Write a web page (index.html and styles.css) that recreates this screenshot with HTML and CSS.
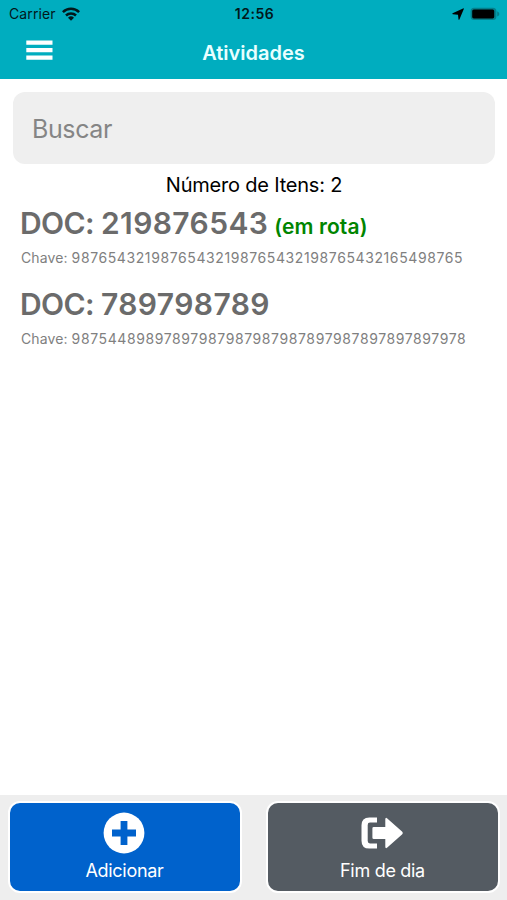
FILE: index.html
```html
<!DOCTYPE html>
<html lang="pt-BR">
    <head>
        <meta charset="utf-8" />
        <title>Atividades</title>
        <meta name="viewport" content="width=device-width, initial-scale=1.0" />
        <link rel="stylesheet" href="styles.css">
    </head>

    <body>
        <header>
            <div class="status">
                <div class="carrier">
                    <span>Carrier</span>
                    <svg width="18" height="14" viewBox="0 0 18 14">
                        <g fill="none" stroke="#02181b" stroke-width="2.5">
                            <path d="M0.9 5.2a11.5 11.5 0 0 1 16.2 0" />
                            <path d="M4 8.5a7.1 7.1 0 0 1 10 0" />
                        </g>
                        <path fill="#02181b" d="M9 13.8 6 10.8a4.3 4.3 0 0 1 6 0z" />
                    </svg>
                </div>
                <span class="time">12:56</span>
                <div class="indicators">
                    <svg width="12" height="12" viewBox="0 0 12 12">
                        <path d="M11.6 0.3Q12 0.4 11.8 0.9L7.4 11.4Q6.9 12.2 6.5 11.4L6 6.8 0.8 6.2Q0 5.8 0.6 5.2z" />
                    </svg>
                    <svg width="30" height="14" viewBox="0 0 30 14">
                        <rect x="0.6" y="0.7" width="25.8" height="12.4" rx="3.6" fill="#047f8b" />
                        <rect x="2.2" y="2.4" width="22" height="9" rx="1.6" />
                        <path fill="#047f8b" d="M27.2 4.3q2.2 1 2.2 2.6t-2.2 2.6z" />
                    </svg>
                </div>
            </div>
            <div class="navbar">
                <button class="menu" aria-label="Menu">
                    <svg width="27" height="20" viewBox="0 0 27 20">
                        <path d="M0.3 0.4h26.2v4.4H0.3zM0.3 8h26.2v4.3H0.3zM0.3 15.4h26.2v4.4H0.3z" />
                    </svg>
                </button>
                <h1>Atividades</h1>
            </div>
        </header>

        <main>
            <input class="search" type="text" placeholder="Buscar" />
            <p class="count">Número de Itens: 2</p>
            <ul class="items">
                <li>
                    <h2><span class="doc">DOC: <span>219876543</span></span> <span class="route">(em rota)</span></h2>
                    <p class="key">Chave: <span>98765432198765432198765432198765432165498765</span></p>
                </li>
                <li>
                    <h2><span class="doc">DOC: <span>789798789</span></span></h2>
                    <p class="key">Chave: <span>98754489897897987987987987897987897897897978</span></p>
                </li>
            </ul>
        </main>

        <footer>
            <button class="action add">
                <svg width="42" height="42" viewBox="0 0 42 42">
                    <circle cx="21" cy="21" r="20.4" />
                    <path fill="#0062cc" d="M17.6 9h6.8v8.6h8.6v6.8h-8.6v8.6h-6.8v-8.6H9v-6.8h8.6z" />
                </svg>
                <span>Adicionar</span>
            </button>
            <button class="action end">
                <svg width="42" height="42" viewBox="0 0 42 42">
                    <path d="M16 5.4v5.2h-7q-2.3 0-2.3 2.3v16.2q0 2.3 2.3 2.3h7v5.2H8.4Q0.5 36.6 0.5 28.7V13.3Q0.5 5.4 8.4 5.4z" />
                    <path d="M11.4 16.3q0-1.4 1.4-1.4h11.5V7.4q0-2.6 2-1L41 19.5q1.5 1.5 0 3L26.3 35.6q-2 1.6-2-1v-7.5H12.8q-1.4 0-1.4-1.4z" />
                </svg>
                <span>Fim de dia</span>
            </button>
        </footer>
    </body>
</html>
```
FILE: styles.css
```css
* {
    box-sizing: border-box;
}

body {
    margin: 0;
    height: 100vh;
    display: flex;
    flex-direction: column;
    font-family: Inter, "Liberation Sans", sans-serif;
    background: #fff;
}

h1,
h2,
p,
ul {
    margin: 0;
    padding: 0;
    font-weight: normal;
    white-space: nowrap;
}

button {
    padding: 0;
    border: 0;
    background: none;
    font-family: inherit;
    color: #fff;
    fill: #fff;
}

svg {
    display: block;
}

header {
    flex: none;
    height: 79px;
    background: #00adbf;
}

.status,
.navbar {
    display: grid;
    grid-template-columns: 1fr auto 1fr;
    align-items: center;
}

.status {
    height: 27px;
    padding: 0 7px 0 9px;
    color: #02181b;
}

.carrier,
.indicators {
    display: flex;
    align-items: center;
    gap: 6px;
    font-size: 14px;
}

.carrier span {
    letter-spacing: 0.1px;
}

.indicators {
    justify-content: flex-end;
}

.time {
    font-size: 14px;
    font-weight: 600;
    letter-spacing: 0.5px;
}

.navbar {
    height: 50px;
    padding: 0 26px;
}

.menu {
    justify-self: start;
    margin-top: -4px;
}

h1 {
    padding-top: 1px;
    font-size: 20px;
    font-weight: 600;
    color: #e9ffff;
}

main {
    flex: 1;
    padding: 13px 12px 0 13px;
}

.search {
    display: block;
    width: 100%;
    height: 72px;
    padding: 2px 18px 0 19px;
    border: 0;
    border-radius: 12px;
    background: #efefef;
    font-family: inherit;
    font-size: 25px;
    letter-spacing: -0.4px;
}

.search::placeholder {
    color: #858585;
}

.count {
    height: 40px;
    line-height: 42px;
    font-size: 20px;
    letter-spacing: -0.2px;
    text-align: center;
}

.items {
    padding-left: 7px;
    list-style: none;
}

.items li {
    height: 81px;
}

h2 {
    height: 38px;
    line-height: 38px;
    font-weight: 600;
}

.doc {
    font-size: 30px;
    letter-spacing: -0.6px;
    color: #6b6b6b;
}

.doc span {
    letter-spacing: 0.4px;
}

.route {
    font-size: 21px;
    letter-spacing: 0.1px;
    color: #008500;
}

.key {
    padding-left: 1px;
    line-height: 32px;
    font-size: 14px;
    letter-spacing: 0.1px;
    color: #808080;
}

.key span {
    letter-spacing: 0.6px;
}

footer {
    flex: none;
    display: grid;
    grid-template-columns: 1fr 1fr;
    gap: 24px;
    height: 105px;
    padding: 6px 7px 7px 8px;
    background: #eee;
}

.action {
    display: flex;
    flex-direction: column;
    align-items: center;
    padding-top: 9px;
    border: 2px solid #fff;
    border-radius: 12px;
    font-size: 18px;
    letter-spacing: -0.3px;
}

.action svg {
    margin-left: -3px;
}

.action span {
    margin: 6px 1px 0 0;
}

.add {
    background: #0062cc;
}

.end {
    background: #545b62;
}
```
